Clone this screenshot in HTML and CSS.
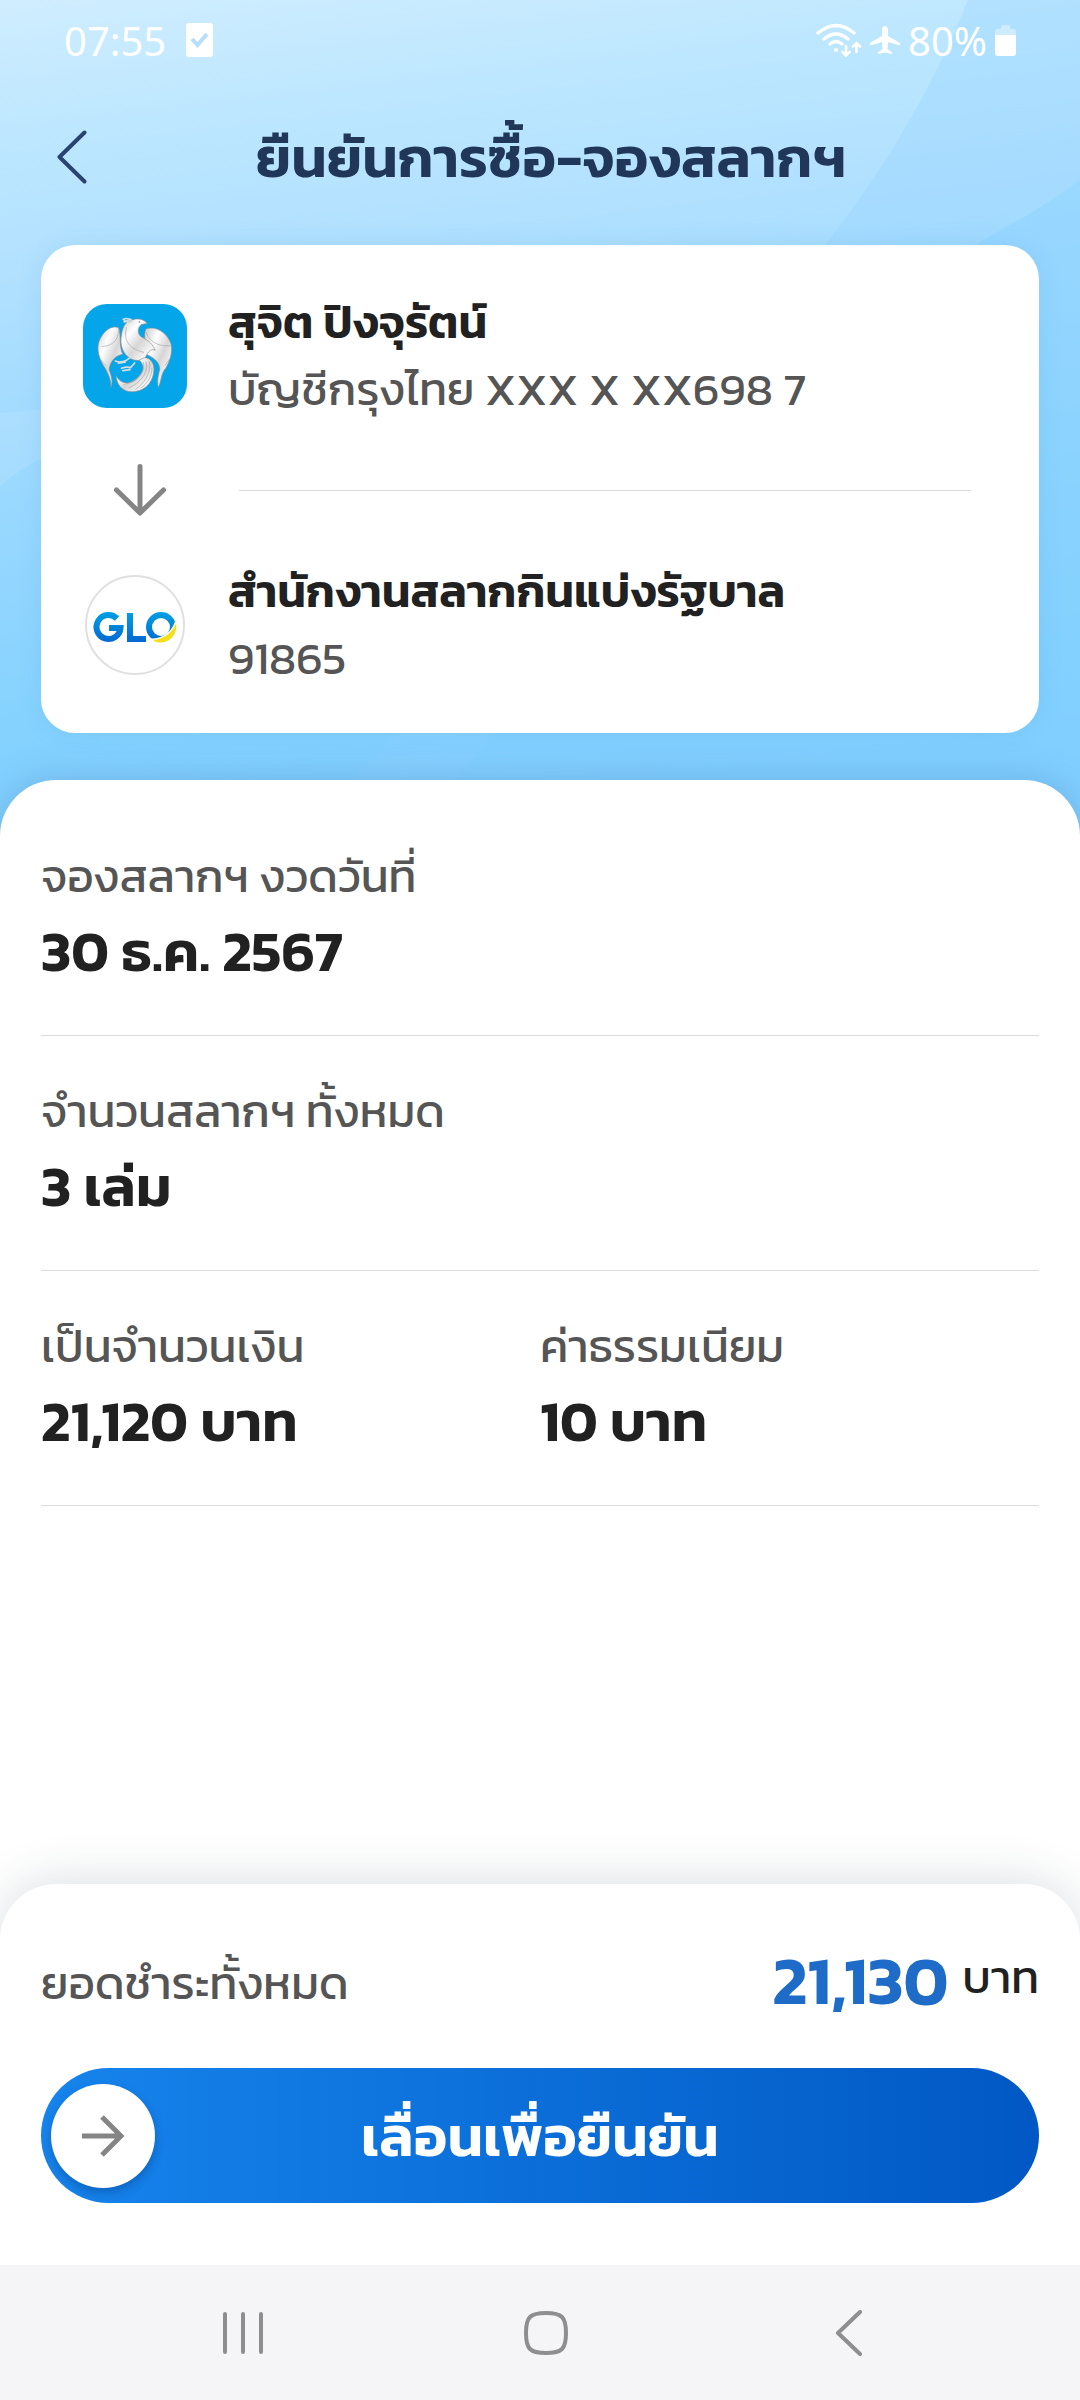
FILE: index.html
```html
<!DOCTYPE html>
<html lang="th">
<head>
<meta charset="utf-8">
<meta name="viewport" content="width=device-width, initial-scale=1">
<title>ยืนยันการซื้อ-จองสลากฯ</title>
<link rel="stylesheet" href="styles.css">
</head>
<body>
<div class="screen">
  <svg class="backdrop" viewBox="0 0 1080 840" preserveAspectRatio="none" aria-hidden="true">
    <defs>
      <linearGradient id="sky" x1="0" y1="0" x2="0.15" y2="1">
        <stop offset="0" stop-color="#d0edff"/>
        <stop offset="0.16" stop-color="#bde7ff"/>
        <stop offset="0.34" stop-color="#b0e0ff"/>
        <stop offset="0.6" stop-color="#98d8ff"/>
        <stop offset="0.85" stop-color="#85d2ff"/>
        <stop offset="1" stop-color="#7fcfff"/>
      </linearGradient>
    </defs>
    <rect width="1080" height="840" fill="url(#sky)"/>
    <path d="M968 0C925 110 845 240 715 370L300 840H1080V0Z" fill="#8fd0ff" fill-opacity="0.28"/>
    <path d="M1080 180C1000 240 940 250 860 330L400 840H1080Z" fill="#7fcfff" fill-opacity="0.3"/>
    <path d="M0 413Q60 410 120 395V430Q40 450 0 486Z" fill="#fff" fill-opacity="0.1"/>
  </svg>

  <div class="status">
    <div class="status-group status-left">
      <span>07:55</span>
      <svg width="27" height="34" viewBox="0 0 27 34" aria-hidden="true"><rect width="27" height="34" rx="3" fill="#fff"/><path d="M6 16l5.500 6L21 11" fill="none" stroke="#b5dffb" stroke-width="4"/></svg>
    </div>
    <div class="status-group">
      <svg width="46" height="34" viewBox="0 0 46 34" fill="none" stroke="#fff" stroke-width="3.400" stroke-linecap="round" aria-hidden="true">
        <path d="M2 10Q20-5 38 10M8 16Q20 6 32 16M14 21Q20 16 26 21"/>
        <circle cx="20" cy="27" r="2" fill="#fff" stroke="none"/>
        <path d="M30 23v9M26.500 29l3.500 3.500 3.500-3.500M40.500 29v-9M37 23.500l3.500-3.500 3.500 3.500" stroke-width="2.600"/>
      </svg>
      <svg width="30" height="30" viewBox="0 0 30 30" aria-hidden="true"><path d="M15 1c2 0 3 2 3 4v6l12 7v2.500L18 17l-.500 7 4.500 3.500V29l-7-1.500L8 29v-1.500l4.500-3.500-.500-7L0 20.500V18l12-7V5c0-2 1-4 3-4z" fill="#fff"/></svg>
      <span class="battery-text">80%</span>
      <svg width="21" height="31" viewBox="0 0 21 31" aria-hidden="true"><path d="M3 4h3V2q0-2 2-2h5q2 0 2 2v2h3q3 0 3 3v4H0V7q0-3 3-3z" fill="#fff" fill-opacity="0.4"/><path d="M0 10h21v18q0 3-3 3H3q-3 0-3-3z" fill="#fff"/></svg>
    </div>
  </div>

  <header class="header">
    <button class="back" type="button" aria-label="กลับ">
      <svg width="30" height="54" viewBox="0 0 30 54" aria-hidden="true"><path d="M27.500 2.500L2.500 27l25 24.500" fill="none" stroke="#2a4370" stroke-width="4" stroke-linecap="round" stroke-linejoin="round"/></svg>
    </button>
    <h1 class="title">ยืนยันการซื้อ-จองสลากฯ</h1>
  </header>

  <section class="card">
    <div class="party">
      <svg class="tile" viewBox="38 38 314 314" aria-hidden="true">
        <defs>
          <linearGradient id="silver" x1="0" y1="0" x2="1" y2="1">
            <stop offset="0" stop-color="#c9c9c9"/><stop offset="0.3" stop-color="#fff"/><stop offset="0.55" stop-color="#d6d6d6"/><stop offset="0.8" stop-color="#f8f8f8"/><stop offset="1" stop-color="#a9a9a9"/>
          </linearGradient>
        </defs>
        <rect x="38" y="38" width="314" height="314" rx="72" fill="#04a6e9"/>
        <g fill="url(#silver)" stroke="#8b8d90" stroke-width="2" stroke-linejoin="round">
          <path d="M145 109C118 99 90 130 84 160C80 188 92 212 105 232C115 252 124 268 122 290C130 270 122 252 117 236C120 212 134 194 158 190C146 166 154 132 145 109Z"/>
          <path d="M228 113C262 102 296 130 304 160C309 186 300 210 288 232C274 246 275 268 266 290C260 270 266 250 270 234C268 210 246 196 224 188C232 160 218 134 228 113Z"/>
          <path d="M232 97C222 82 198 80 186 87C164 90 156 112 153 138C150 166 160 190 180 202C196 212 212 206 222 212C230 184 244 170 256 178C244 150 230 148 220 140C202 134 200 112 214 100Z"/>
          <path d="M208 207C226 226 222 246 198 266C178 282 150 280 138 254C140 290 166 308 196 302C234 296 250 266 252 240C254 218 242 200 224 200Z"/>
        </g>
        <path d="M186 88Q172 78 160 84Q170 96 186 92M182 84Q170 90 162 92M136 210Q150 216 168 209L180 200M145 217L165 214M154 232Q170 226 182 230L194 216M158 239L180 236" fill="none" stroke="#d9dcde" stroke-width="5" stroke-linecap="round"/>
        <path d="M146 116C144 150 124 166 94 166M228 122C236 148 262 168 302 164M170 108C158 148 178 174 222 184M92 206L108 226M286 224L302 200M238 210C246 244 224 278 196 296M228 212C238 246 210 276 176 292M220 214C228 244 198 272 160 282M246 230C248 254 232 280 212 292" fill="none" stroke="#a5a7aa" stroke-width="2"/>
        <circle cx="208" cy="92" r="2" fill="#555"/>
      </svg>
      <div class="party-text">
        <p class="name">สุจิต ปิงจุรัตน์</p>
        <p class="account">บัญชีกรุงไทย XXX X XX698 7</p>
      </div>
    </div>
    <div class="between">
      <svg width="52" height="52" viewBox="0 0 52 52" fill="none" stroke="#858585" stroke-width="5" stroke-linecap="round" stroke-linejoin="round" aria-hidden="true"><path d="M26 2.500v46M2.500 26L26 49l23.500-23"/></svg>
      <hr class="between-line">
    </div>
    <div class="party">
      <svg class="tile" viewBox="0 0 104 104" role="img" aria-label="GLO">
        <defs>
          <linearGradient id="glo" x1="0" y1="39" x2="0" y2="69" gradientUnits="userSpaceOnUse"><stop offset="0" stop-color="#00a0e3"/><stop offset="1" stop-color="#0468d2"/></linearGradient>
        </defs>
        <circle cx="52" cy="52" r="49" fill="#fff" stroke="#e0e0e2" stroke-width="2"/>
        <g fill="none" stroke="url(#glo)" stroke-width="6">
          <path d="M34 45.500A12 12 0 1 0 37.500 55H26"/>
          <path d="M47 40V66H63"/>
          <circle cx="78" cy="54" r="12"/>
        </g>
        <path d="M93 50C95 60 88 69 78 69.500C74 69.500 72 69 70 67C80 66 89 61 93 50Z" fill="#f5df18" stroke="#fff" stroke-width="3" paint-order="stroke"/>
      </svg>
      <div class="party-text">
        <p class="name">สำนักงานสลากกินแบ่งรัฐบาล</p>
        <p class="account">91865</p>
      </div>
    </div>
  </section>

  <main class="sheet">
    <dl class="details">
      <div class="row"><div class="cell"><dt>จองสลากฯ งวดวันที่</dt><dd>30 ธ.ค. 2567</dd></div></div>
      <div class="row"><div class="cell"><dt>จำนวนสลากฯ ทั้งหมด</dt><dd>3 เล่ม</dd></div></div>
      <div class="row">
        <div class="cell"><dt>เป็นจำนวนเงิน</dt><dd>21,120 บาท</dd></div>
        <div class="cell"><dt>ค่าธรรมเนียม</dt><dd>10 บาท</dd></div>
      </div>
    </dl>
  </main>

  <footer class="footer">
    <div class="total">
      <span class="total-label">ยอดชำระทั้งหมด</span>
      <span class="total-value"><strong class="amount">21,130</strong><span class="unit">บาท</span></span>
    </div>
    <div class="slide">
      <input class="slide-input" id="confirm" type="range" min="0" max="100" value="0">
      <label class="slide-label" for="confirm">เลื่อนเพื่อยืนยัน</label>
    </div>
  </footer>

  <nav class="nav" aria-label="ระบบ">
    <button type="button" aria-label="แอปล่าสุด"><svg width="44" height="44" viewBox="0 0 44 44" stroke="#8e8e90" stroke-width="4" stroke-linecap="round" aria-hidden="true"><path d="M4 3v38M22 3v38M40 3v38"/></svg></button>
    <button type="button" aria-label="หน้าหลัก"><svg width="46" height="46" viewBox="0 0 46 46" fill="none" stroke="#8e8e90" stroke-width="4" aria-hidden="true"><path d="M23 3C39 3 43 7 43 23S39 43 23 43 3 39 3 23 7 3 23 3Z"/></svg></button>
    <button type="button" aria-label="ย้อนกลับ"><svg width="46" height="46" viewBox="0 0 46 46" fill="none" stroke="#8e8e90" stroke-width="4" stroke-linecap="round" stroke-linejoin="round" aria-hidden="true"><path d="M34 2L12 23l22 21"/></svg></button>
  </nav>
</div>
</body>
</html>
```
FILE: styles.css
```css
* { box-sizing: border-box; }

body {
  margin: 0;
  background: #fff;
  color: #212121;
  font-family: Kanit, Prompt, "Noto Sans Thai", "Noto Sans", sans-serif;
}

h1, p, dl, dd { margin: 0; }

button {
  display: flex;
  align-items: center;
  justify-content: center;
  padding: 0;
  border: 0;
  background: none;
}

svg { display: block; flex: none; }

.screen {
  position: relative;
  display: flex;
  flex-direction: column;
  min-height: 100vh;
}

.backdrop {
  position: absolute;
  inset: 0 0 auto;
  z-index: -1;
  width: 100%;
  height: 840px;
}

.status {
  display: flex;
  align-items: center;
  justify-content: space-between;
  height: 80px;
  padding: 0 64px;
  color: #fff;
  font-family: "Noto Sans", sans-serif;
  font-size: 40px;
}

.status-group { display: flex; align-items: center; gap: 8px; }
.status-left { gap: 20px; }

.header {
  display: grid;
  grid-template-columns: 62px 1fr 40px;
  align-items: center;
  height: 165px;
  padding: 0 41px 12px;
}

.back { height: 80px; }

.title {
  color: #213759;
  font-size: 57px;
  font-weight: 600;
  line-height: 78px;
  text-align: center;
  white-space: nowrap;
}

.card {
  margin: 0 41px;
  padding: 44px 42px 42px;
  border-radius: 34px;
  background: #fff;
  box-shadow: 0 0 24px rgba(60, 130, 200, 0.12);
}

.party { display: flex; align-items: center; gap: 41px; }
.tile { width: 104px; height: 104px; }
.party-text { min-width: 0; }

.name {
  font-size: 46px;
  font-weight: 600;
  line-height: 66px;
}

.account {
  color: #555;
  font-size: 46px;
  line-height: 67px;
}

.between {
  display: flex;
  align-items: center;
  gap: 73px;
  height: 136px;
  padding: 0 26px 0 31px;
}

.between-line {
  flex: 1;
  height: 1px;
  margin: 0;
  border: 0;
  background: #dcdcdc;
}

.sheet {
  flex: 1;
  margin-top: 47px;
  padding: 21px 41px 56px;
  border-radius: 56px 56px 0 0;
  background: #fff;
  box-shadow: 0 0 36px rgba(60, 110, 170, 0.3);
}

.row {
  display: grid;
  grid-auto-flow: column;
  grid-auto-columns: 1fr;
  height: 235px;
  padding-top: 40px;
  border-bottom: 1px solid #dcdcdc;
}

dt {
  color: #555;
  font-size: 46px;
  line-height: 70px;
}

dd {
  font-size: 57px;
  font-weight: 600;
  line-height: 80px;
}

.footer {
  position: relative;
  margin-top: -56px;
  padding: 56px 41px 62px;
  border-radius: 56px 56px 0 0;
  background: #fff;
  box-shadow: 0 -4px 48px rgba(40, 60, 80, 0.16);
}

.total {
  display: flex;
  align-items: center;
  justify-content: space-between;
  height: 80px;
  margin-bottom: 48px;
}

.total-label { padding-top: 4px; color: #555; font-size: 46px; }
.total-value { display: flex; gap: 14px; }
.amount { color: #1e6bc8; font-size: 68px; font-weight: 600; line-height: 78px; }
.unit { font-size: 46px; line-height: 72px; }

.slide {
  display: grid;
  align-items: center;
  border-radius: 68px;
  background: linear-gradient(90deg, #1684ec, #0158c4);
}

.slide-input,
.slide-label { grid-area: 1 / 1; }

.slide-input {
  appearance: none;
  width: 100%;
  height: 135px;
  margin: 0;
  padding: 0 10px;
  border-radius: 68px;
  background: none;
}

.slide-input::-webkit-slider-thumb {
  appearance: none;
  width: 104px;
  height: 104px;
  border: 0;
  border-radius: 50%;
  background: #fff url("data:image/svg+xml,%3Csvg xmlns='http://www.w3.org/2000/svg' width='42' height='42' fill='none' stroke='%23858585' stroke-width='5'%3E%3Cpath d='M0 21h39M20 2l19 19-19 19'/%3E%3C/svg%3E") center no-repeat;
  box-shadow: 0 5px 10px rgba(0, 40, 100, 0.3);
}

.slide-label {
  color: #fff;
  font-size: 57px;
  font-weight: 600;
  line-height: 80px;
  text-align: center;
  pointer-events: none;
}

.nav {
  position: relative;
  display: grid;
  grid-template-columns: repeat(3, 1fr);
  height: 135px;
  padding: 0 80px 0 91px;
  background: #f5f5f8;
}
```
